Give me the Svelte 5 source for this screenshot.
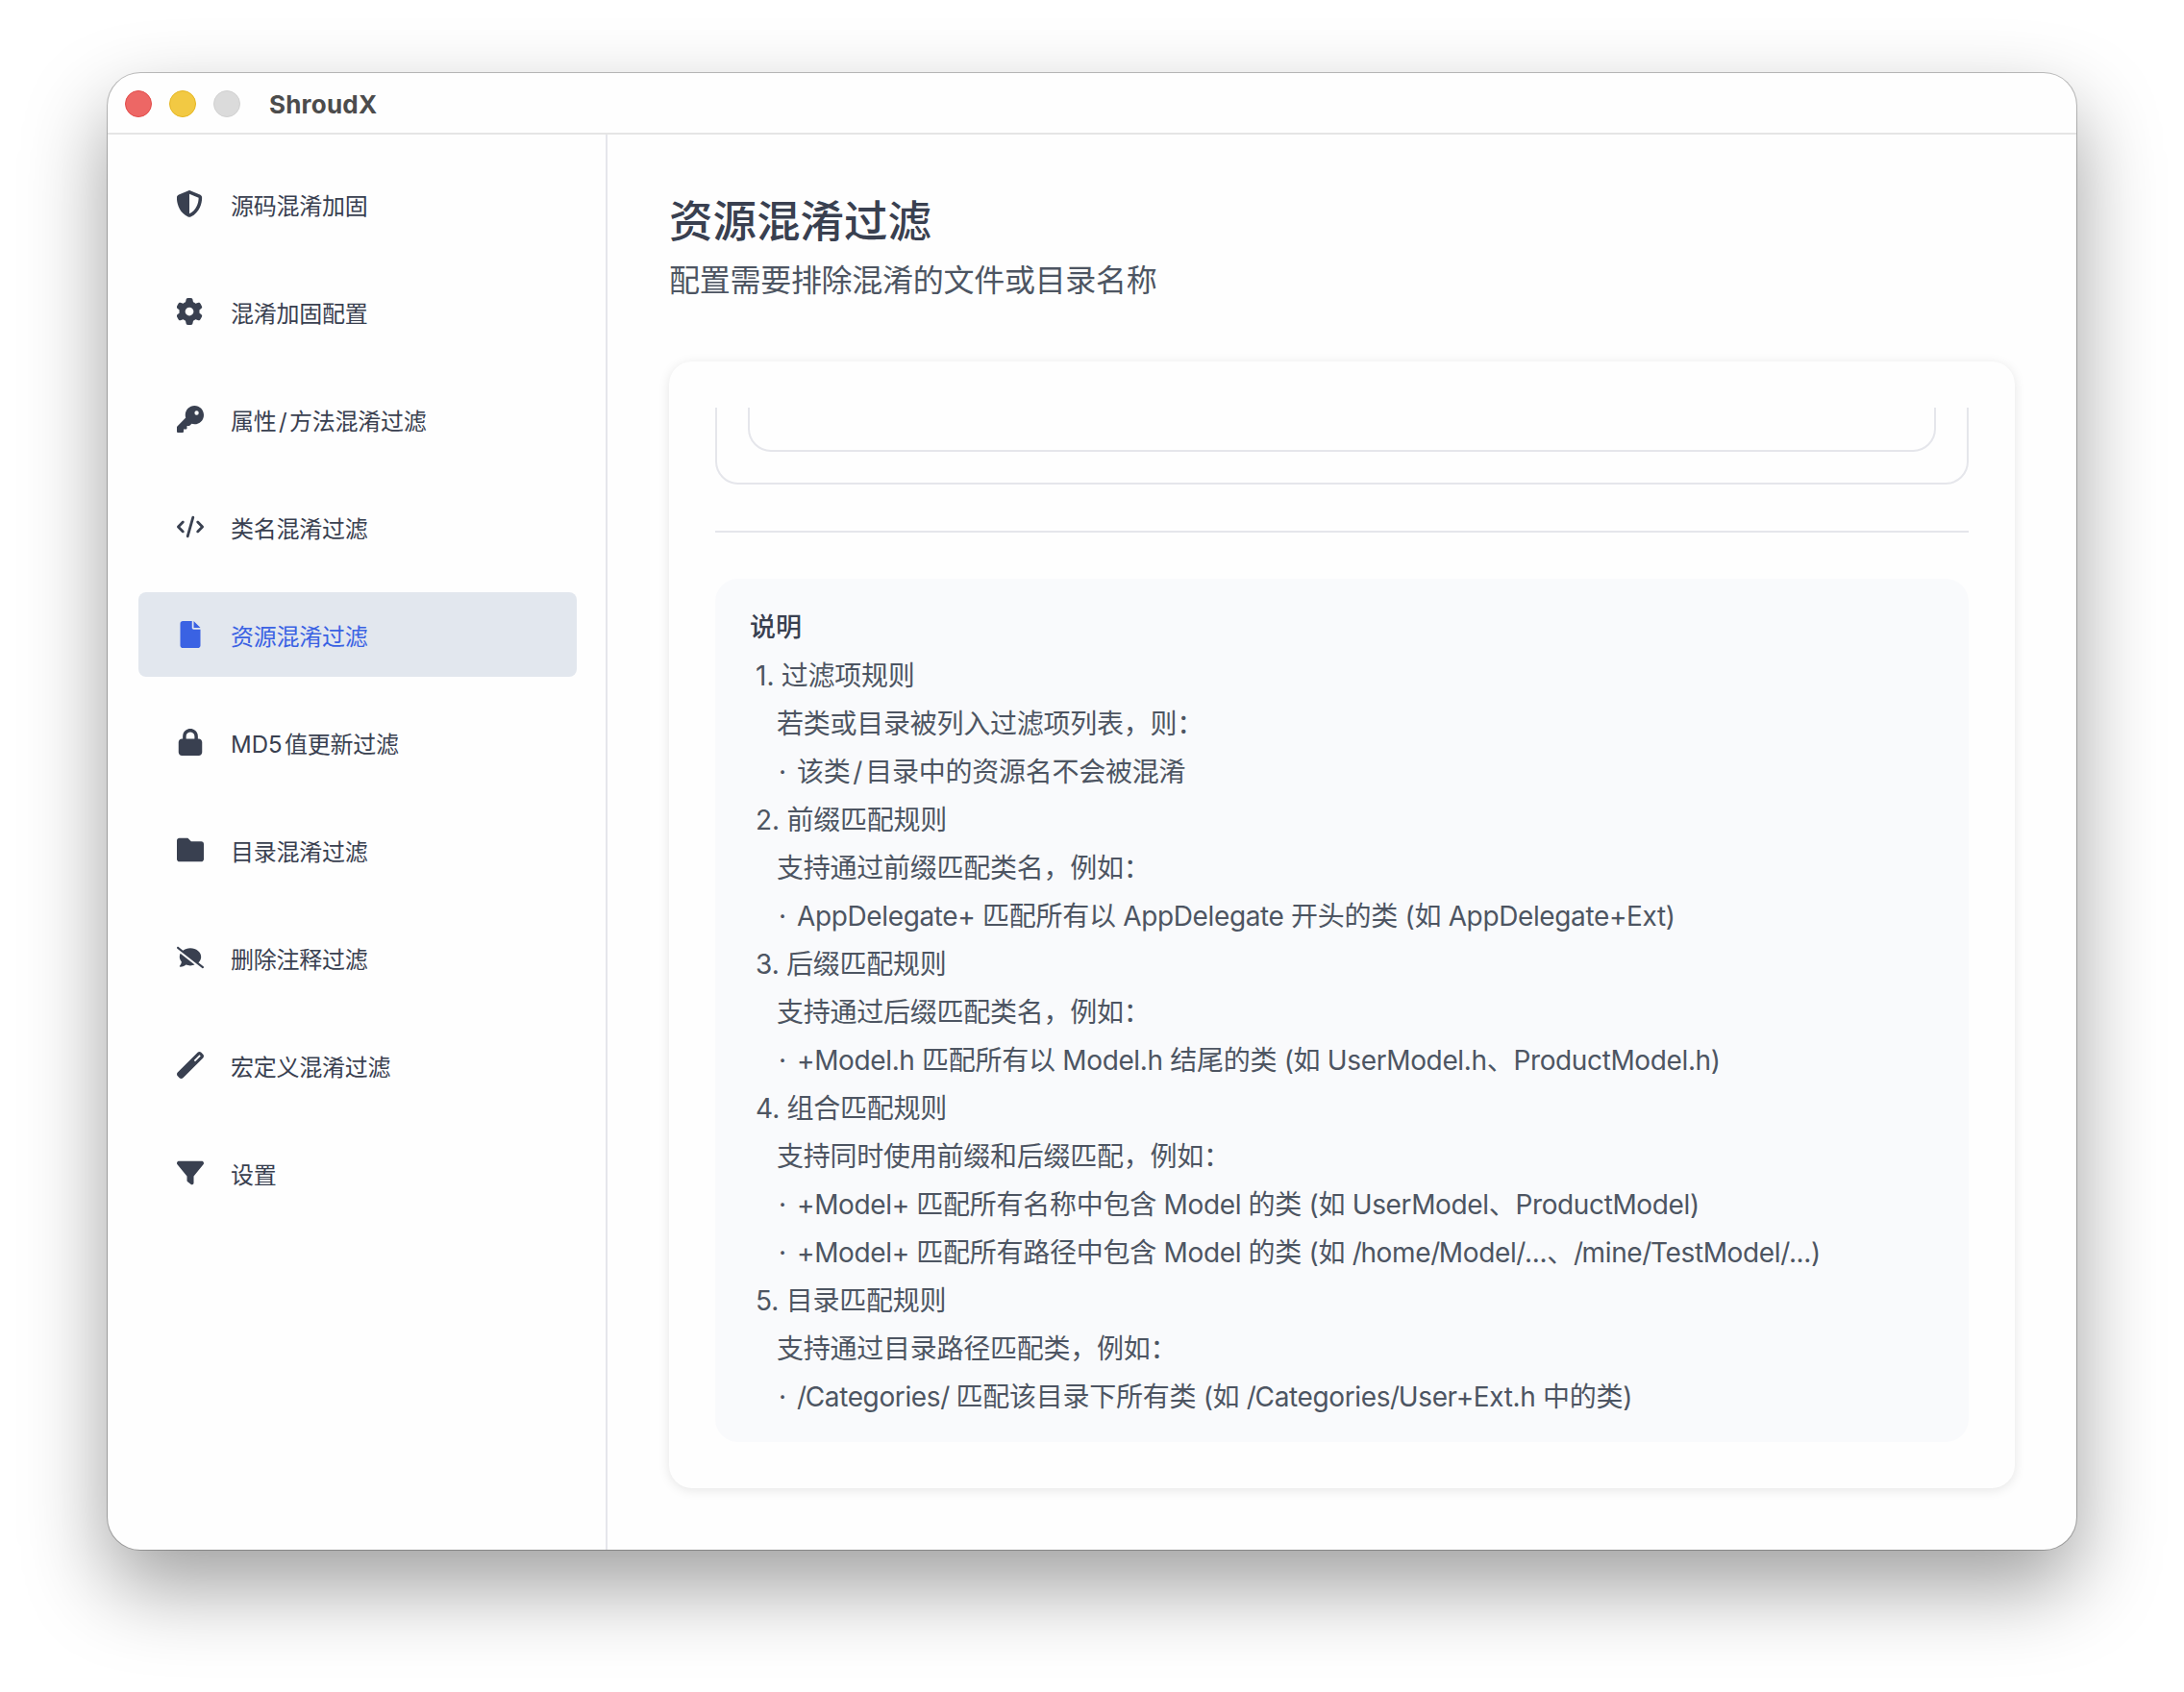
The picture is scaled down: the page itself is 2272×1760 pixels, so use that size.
<script>
    let active = $state("resource");

    // Solid icons, all drawn inside a 28px slot
    const icons = {
        shield: {
            box: "18 0 512 512",
            path: "M256 0c4.6 0 9.2 1 13.4 2.9L457.7 82.8c22 9.3 38.4 31 38.3 57.2c-.5 99.2-41.3 280.7-213.6 363.2c-16.7 8-36.1 8-52.8 0C57.3 420.7 16.5 239.2 16 140c-.1-26.2 16.3-47.9 38.3-57.2L242.7 2.9C246.8 1 251.4 0 256 0zm0 66.8V444.8C394 378 431.1 230.1 432 141.4L256 66.8z",
        },
        gear: {
            box: "18 0 512 512",
            path: "M495.9 166.6c3.2 8.7 .5 18.4-6.4 24.6l-43.3 39.4c1.1 8.3 1.7 16.8 1.7 25.4s-.6 17.1-1.7 25.4l43.3 39.4c6.9 6.2 9.6 15.9 6.4 24.6c-4.4 11.9-9.7 23.3-15.8 34.3l-4.7 8.1c-6.6 11-14 21.4-22.1 31.2c-5.9 7.2-15.7 9.6-24.5 6.8l-55.7-17.7c-13.4 10.3-28.2 18.9-44 25.4l-12.5 57.1c-2 9.1-9 16.3-18.2 17.8c-13.8 2.3-28 3.5-42.5 3.5s-28.7-1.2-42.5-3.5c-9.2-1.5-16.2-8.7-18.2-17.8l-12.5-57.1c-15.8-6.5-30.6-15.1-44-25.4L83.1 425.9c-8.8 2.8-18.6 .3-24.5-6.8c-8.1-9.8-15.5-20.2-22.1-31.2l-4.7-8.1c-6.1-11-11.4-22.4-15.8-34.3c-3.2-8.7-.5-18.4 6.4-24.6l43.3-39.4C64.6 273.1 64 264.6 64 256s.6-17.1 1.7-25.4L22.4 191.2c-6.9-6.2-9.6-15.9-6.4-24.6c4.4-11.9 9.7-23.3 15.8-34.3l4.7-8.1c6.6-11 14-21.4 22.1-31.2c5.9-7.2 15.7-9.6 24.5-6.8l55.7 17.7c13.4-10.3 28.2-18.9 44-25.4l12.5-57.1c2-9.1 9-16.3 18.2-17.8C227.3 1.2 241.5 0 256 0s28.7 1.2 42.5 3.5c9.2 1.5 16.2 8.7 18.2 17.8l12.5 57.1c15.8 6.5 30.6 15.1 44 25.4l55.7-17.7c8.8-2.8 18.6-.3 24.5 6.8c8.1 9.8 15.5 20.2 22.1 31.2l4.7 8.1c6.1 11 11.4 22.4 15.8 34.3zM256 336a80 80 0 1 0 0-160 80 80 0 1 0 0 160z",
        },
        key: {
            box: "0 0 512 512",
            path: "M336 352c97.2 0 176-78.8 176-176S433.2 0 336 0S160 78.8 160 176c0 18.7 2.9 36.8 8.3 53.7L7 391c-4.5 4.5-7 10.6-7 17v80c0 13.3 10.7 24 24 24h80c13.3 0 24-10.7 24-24V448h40c13.3 0 24-10.7 24-24V384h40c6.4 0 12.5-2.5 17-7l33.3-33.3c16.9 5.4 35 8.3 53.7 8.3zM376 96a40 40 0 1 1 0 80 40 40 0 1 1 0-80z",
        },
        code: {
            box: "0 0 640 512",
            path: "M392.8 1.2c-17-4.9-34.7 5-39.6 22l-128 448c-4.9 17 5 34.7 22 39.6s34.7-5 39.6-22l128-448c4.9-17-5-34.7-22-39.6zm80.6 120.1c-12.5 12.5-12.5 32.8 0 45.3L562.7 256l-89.4 89.4c-12.5 12.5-12.5 32.8 0 45.3s32.8 12.5 45.3 0l112-112c12.5-12.5 12.5-32.8 0-45.3l-112-112c-12.5-12.5-32.8-12.5-45.3 0zm-306.7 0c-12.5-12.5-32.8-12.5-45.3 0l-112 112c-12.5 12.5-12.5 32.8 0 45.3l112 112c12.5 12.5 32.8 12.5 45.3 0s12.5-32.8 0-45.3L77.3 256l89.4-89.4c12.5-12.5 12.5-32.8 0-45.3z",
        },
        file: {
            box: "0 0 384 512",
            path: "M0 48C0 21.5 21.5 0 48 0H224V128c0 17.7 14.3 32 32 32H384V464c0 26.5-21.5 48-48 48H48c-26.5 0-48-21.5-48-48V48zm384 80H256V0L384 128z",
        },
        lock: {
            box: "0 0 448 512",
            path: "M144 144v48H304V144c0-44.2-35.8-80-80-80s-80 35.8-80 80zM80 192V144C80 64.5 144.5 0 224 0s144 64.5 144 144v48h16c35.3 0 64 28.7 64 64V448c0 35.3-28.7 64-64 64H64c-35.3 0-64-28.7-64-64V256c0-35.3 28.7-64 64-64H80z",
        },
        folder: {
            box: "0 0 512 512",
            path: "M512 144v288c0 26.5-21.5 48-48 48H48C21.5 480 0 458.5 0 432V80C0 53.5 21.5 32 48 32h160l64 64h192c26.5 0 48 21.5 48 48z",
        },
        comment: {
            box: "0 0 640 512",
            path: "M38.8 5.1C28.4-3.1 13.3-1.2 5.1 9.2S-1.2 34.7 9.2 42.9l592 464c10.4 8.2 25.5 6.3 33.7-4.1s6.3-25.5-4.1-33.7L512.9 376.7C552.2 340.2 576 292.3 576 240C576 125.1 461.4 32 320 32c-67.7 0-129.3 21.4-175.1 56.3L38.8 5.1zM64 240c0 45.1 17.7 86.8 47.7 120.9c-1.9 24.5-11.4 46.3-21.4 62.9c-5.5 9.2-11.1 16.6-15.2 21.6c-2.1 2.5-3.7 4.4-4.9 5.7c-.6 .6-1 1.1-1.3 1.4l-.3 .3c-4.6 4.6-5.9 11.4-3.4 17.4c2.5 6 8.3 9.9 14.8 9.9c28.7 0 57.6-8.9 81.6-19.3c22.9-10 42.4-21.9 54.3-30.6c31.8 11.5 67 17.9 104.1 17.9c37.2 0 72.3-6.4 104.1-17.9L82.9 161.3C70.7 185.6 64 212.2 64 240z",
        },
        wand: {
            box: "0 0 512 512",
            path: "M14.1 463.3c-18.7-18.7-18.7-49.1 0-67.9L395.4 14.1c18.7-18.7 49.1-18.7 67.9 0l34.6 34.6c18.7 18.7 18.7 49.1 0 67.9L116.5 497.9c-18.7 18.7-49.1 18.7-67.9 0L14.1 463.3zM347.6 187.6l105-105L429.4 59.3l-105 105 23.3 23.3z",
        },
        filter: {
            box: "0 0 512 512",
            path: "M3.9 54.9C10.5 40.9 24.5 32 40 32H472c15.5 0 29.5 8.9 36.1 22.9s4.6 30.5-5.2 42.5L320 320.9V448c0 12.1-6.8 23.2-17.7 28.6s-23.8 4.3-33.5-3l-64-48c-8.1-6-12.8-15.5-12.8-25.6V320.9L9 97.3C-.7 85.4-2.8 68.8 3.9 54.9z",
        },
    };

    const menu = [
        { id: "source", icon: "shield", label: "源码混淆加固" },
        { id: "config", icon: "gear", label: "混淆加固配置" },
        { id: "property", icon: "key", label: "属性/方法混淆过滤" },
        { id: "class", icon: "code", label: "类名混淆过滤" },
        { id: "resource", icon: "file", label: "资源混淆过滤" },
        { id: "md5", icon: "lock", label: "MD5值更新过滤" },
        { id: "directory", icon: "folder", label: "目录混淆过滤" },
        { id: "comment", icon: "comment", label: "删除注释过滤" },
        { id: "macro", icon: "wand", label: "宏定义混淆过滤" },
        { id: "settings", icon: "filter", label: "设置" },
    ];

    const rules = [
        {
            title: "过滤项规则",
            desc: "若类或目录被列入过滤项列表，则：",
            points: ["该类/目录中的资源名不会被混淆"],
        },
        {
            title: "前缀匹配规则",
            desc: "支持通过前缀匹配类名，例如：",
            points: ["AppDelegate+ 匹配所有以 AppDelegate 开头的类 (如 AppDelegate+Ext)"],
        },
        {
            title: "后缀匹配规则",
            desc: "支持通过后缀匹配类名，例如：",
            points: ["+Model.h 匹配所有以 Model.h 结尾的类 (如 UserModel.h、ProductModel.h)"],
        },
        {
            title: "组合匹配规则",
            desc: "支持同时使用前缀和后缀匹配，例如：",
            points: [
                "+Model+ 匹配所有名称中包含 Model 的类 (如 UserModel、ProductModel)",
                "+Model+ 匹配所有路径中包含 Model 的类 (如 /home/Model/...、/mine/TestModel/...)",
            ],
        },
        {
            title: "目录匹配规则",
            desc: "支持通过目录路径匹配类，例如：",
            points: ["/Categories/ 匹配该目录下所有类 (如 /Categories/User+Ext.h 中的类)"],
        },
    ];

    // Chinese, Latin and slashes are tracked differently
    function runs(text) {
        const parts = text.match(/[\u3000-\uffef]+|\/|[^\u3000-\uffef/]+/g);
        const han = (part) => /^[\u3000-\uffef]/.test(part ?? "");

        return parts.map((part, i) => {
            if (han(part)) return { part, kind: "han" };
            if (part !== "/") return { part, kind: "latin" };
            const between = han(parts[i - 1]) && han(parts[i + 1]);
            return { part, kind: between ? "divider" : "slash" };
        });
    }
</script>

{#snippet mixed(text)}
    {#each runs(text) as run}<span class={run.kind}>{run.part}</span>{/each}
{/snippet}

<div class="window">
    <header class="titlebar">
        <span class="light red"></span>
        <span class="light yellow"></span>
        <span class="light gray"></span>
        <span class="app-name">ShroudX</span>
    </header>

    <div class="body">
        <nav class="sidebar">
            {#each menu as item (item.id)}
                <button
                    class="item"
                    class:active={item.id === active}
                    onclick={() => (active = item.id)}
                >
                    <svg class="icon" viewBox={icons[item.icon].box}>
                        <path d={icons[item.icon].path} fill="currentColor" />
                    </svg>
                    <span class="label">{@render mixed(item.label)}</span>
                </button>
            {/each}
        </nav>

        <main class="content">
            <h1>资源混淆过滤</h1>
            <p class="subtitle">配置需要排除混淆的文件或目录名称</p>

            <section class="card">
                <div class="scroll">
                    <div class="list">
                        <div class="list-inner"></div>
                    </div>
                    <hr />
                    <div class="notes">
                        <h2>说明</h2>
                        {#each rules as rule, index}
                            <div class="rule">
                                <div class="rule-title">{index + 1}. {@render mixed(rule.title)}</div>
                                <div class="rule-desc">{@render mixed(rule.desc)}</div>
                                {#each rule.points as point}
                                    <div class="point">
                                        <span class="dot">·</span>
                                        <span>{@render mixed(point)}</span>
                                    </div>
                                {/each}
                            </div>
                        {/each}
                    </div>
                </div>
            </section>
        </main>
    </div>
</div>

<style>
    :global(body) {
        background: #fff;
        overflow: hidden;
    }

    .window {
        width: 2048px;
        height: 1536px;
        margin: 76px 112px 148px;
        display: flex;
        flex-direction: column;
        background: #fefefe;
        border-radius: 34px;
        overflow: hidden;
        box-sizing: border-box;
        box-shadow:
            0 0 0 1px rgba(0, 0, 0, 0.24),
            0 38px 86px rgba(0, 0, 0, 0.38);
        font-family: Inter, "Noto Sans CJK SC", sans-serif;
        color: #394050;
    }

    .titlebar {
        height: 64px;
        flex: none;
        box-sizing: border-box;
        display: flex;
        align-items: center;
        gap: 18px;
        padding: 2px 0 0 18px;
        border-bottom: 2px solid #e5e5e5;
    }

    .light {
        width: 28px;
        height: 28px;
        box-sizing: border-box;
        border-radius: 50%;
        border: 1px solid;
    }

    .red {
        background: #ed6765;
        border-color: #e24b49;
    }

    .yellow {
        background: #f2c943;
        border-color: #e5b622;
    }

    .gray {
        background: #dbdbdb;
        border-color: #d0d0d0;
    }

    .app-name {
        margin-left: 12px;
        font-size: 26px;
        font-weight: 700;
        letter-spacing: 0.2px;
        color: #4c4c4c;
    }

    .body {
        flex: 1;
        display: flex;
        min-height: 0;
    }

    .sidebar {
        width: 520px;
        flex: none;
        box-sizing: border-box;
        display: flex;
        flex-direction: column;
        gap: 24px;
        padding: 28px 30px 0 32px;
        border-right: 2px solid #e5e6eb;
    }

    .item {
        height: 88px;
        display: flex;
        align-items: center;
        gap: 28px;
        padding: 0 40px;
        border: none;
        border-radius: 8px;
        background: none;
        color: #394050;
        font-family: inherit;
        font-size: 24px;
        cursor: pointer;
    }

    .item.active {
        background: #e2e7ee;
        color: #3a62e3;
    }

    .icon {
        width: 28px;
        height: 28px;
        flex: none;
    }

    .label {
        white-space: nowrap;
    }

    .label .latin {
        margin-right: 2.4px;
    }

    .han {
        letter-spacing: -0.25px;
    }

    .divider {
        margin: 0 0.1em;
    }

    .content {
        flex: 1;
        min-width: 0;
        display: flex;
        flex-direction: column;
        padding: 57px 64px 64px;
    }

    h1 {
        margin: 0;
        font-size: 45.5px;
        font-weight: 500;
        line-height: 68px;
    }

    .subtitle {
        margin: 1px 0 58px;
        font-size: 32px;
        line-height: 52px;
        letter-spacing: -0.28px;
        color: #4d5562;
    }

    .card {
        flex: 1;
        min-height: 0;
        display: flex;
        box-sizing: border-box;
        padding: 48px;
        border-radius: 24px;
        background: #fefefe;
        box-shadow: 0 2px 12px rgba(0, 0, 0, 0.1);
    }

    .scroll {
        flex: 1;
        display: flex;
        flex-direction: column;
        justify-content: flex-end;
        overflow: hidden;
    }

    .list {
        height: 400px;
        flex: none;
        box-sizing: border-box;
        padding: 32px;
        border: 2px solid #e5e6eb;
        border-radius: 24px;
    }

    .list-inner {
        height: 100%;
        box-sizing: border-box;
        border: 2px solid #e5e6eb;
        border-radius: 24px;
    }

    hr {
        width: 100%;
        height: 2px;
        flex: none;
        margin: 48px 0;
        border: none;
        background: #e5e6eb;
    }

    .notes {
        flex: none;
        padding: 26px 36px 22px;
        border-radius: 24px;
        background: #f9fafc;
        font-size: 28px;
        line-height: 50px;
        color: #4d5562;
        white-space: nowrap;
    }

    .notes .latin {
        letter-spacing: -0.37px;
    }

    .notes .slash {
        letter-spacing: -1.4px;
    }

    h2 {
        margin: 0;
        font-size: 27px;
        font-weight: 500;
        line-height: 50px;
        color: #394050;
    }

    .rule {
        padding-left: 6px;
    }

    .rule-title {
        word-spacing: -0.6px;
    }

    .rule-desc {
        padding-left: 22px;
    }

    .point {
        display: flex;
        padding-left: 22px;
    }

    .dot {
        width: 21px;
        box-sizing: border-box;
        padding-left: 2px;
    }
</style>
